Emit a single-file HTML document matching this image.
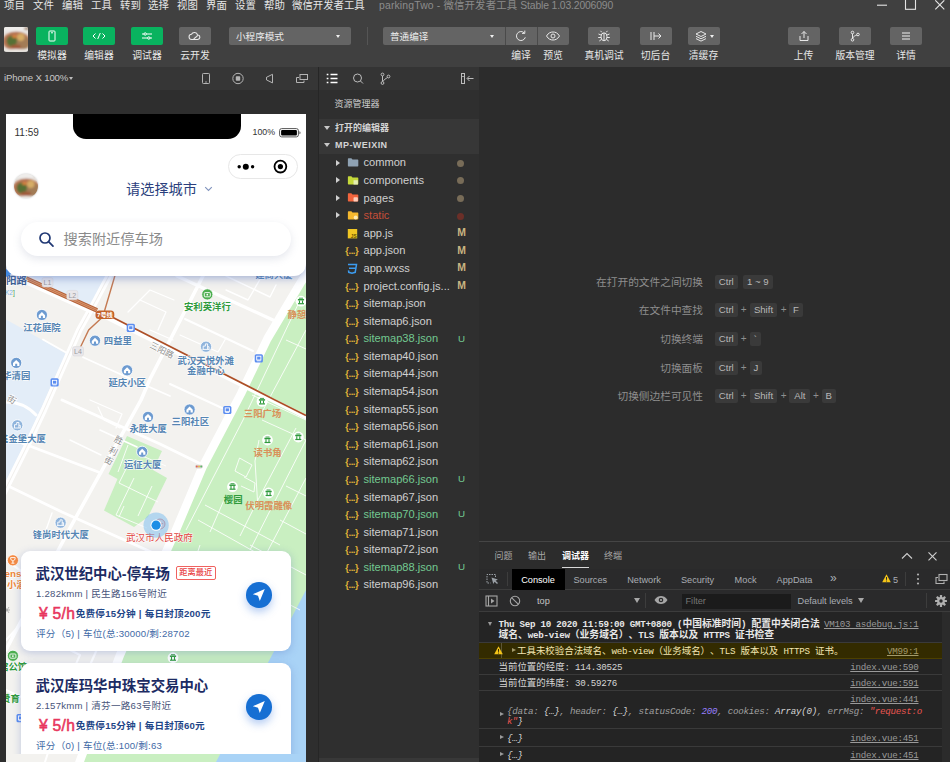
<!DOCTYPE html>
<html lang="zh-CN">
<head>
<meta charset="utf-8">
<title>parkingTwo - 微信开发者工具 Stable 1.03.2006090</title>
<style>
*{box-sizing:border-box;margin:0;padding:0}
html,body{width:950px;height:762px;overflow:hidden;background:#2c2c2c}
body{font-family:"Liberation Sans","Noto Sans CJK SC",sans-serif;color:#ccc;position:relative;font-size:10.4px;line-height:1}
.abs{position:absolute}
.t{position:absolute;white-space:nowrap;line-height:1}
/* ---------- top chrome ---------- */
#chrome{position:absolute;left:0;top:0;width:950px;height:67px;background:#404040}
#menu span{position:absolute;top:0px;font-size:10.4px;color:#e6e6e6;white-space:nowrap;line-height:12px}
.tbtn{position:absolute;top:27px;height:18px;border-radius:2px;background:#646464}
.tbtn.g{background:#09b35f}
.tlab{position:absolute;top:50px;font-size:9.8px;color:#e8e8e8;white-space:nowrap;line-height:12px;transform:translateX(-50%)}
/* ---------- simulator ---------- */
#sim{position:absolute;left:0;top:67px;width:318px;height:695px;background:#2e2e2e;overflow:hidden}
#simhead{position:absolute;left:0;top:0;width:318px;height:23px;background:#363636}
#phone{position:absolute;left:6px;top:47px;width:300px;height:648px;background:#f3f2ef;overflow:hidden}
/* ---------- explorer ---------- */
#exp{position:absolute;left:318px;top:67px;width:161px;height:695px;background:#2f2f2f;border-left:1px solid #262626;overflow:hidden}
#exphead{position:absolute;left:0;top:0;width:160px;height:23px;background:#343434}
/* ---------- editor ---------- */
#editor{position:absolute;left:479px;top:67px;width:471px;height:474px;background:#2c2c2c}
/* ---------- debugger ---------- */
#dbg{position:absolute;left:479px;top:541px;width:471px;height:221px;background:#2c2c2c;border-top:1px solid #454545;overflow:hidden}

/* explorer rows */
.sec{position:absolute;left:0;width:160px;height:17.6px;background:#373737}
.sec b{position:absolute;left:16px;top:3px;font-size:9px;line-height:12px;color:#d4d4d4;font-weight:700;white-space:nowrap}
.sec i{position:absolute;left:4.500px;top:7px;border:3.200px solid transparent;border-top:4.200px solid #c8c8c8}
.row{position:absolute;left:0;width:160px;height:17.6px}
.row .n{position:absolute;left:44.500px;top:2.300px;font-size:11.100px;line-height:13px;color:#d0d0d0;white-space:nowrap}
.row.u .n{color:#73c991}
.row.r .n{color:#c74e39}
.row .s{position:absolute;left:135.500px;width:14px;text-align:center;top:2.600px;font-size:10.400px;line-height:12px;font-weight:700;color:#c9b581}
.row.u .s{color:#73c991;font-weight:400;font-size:9.800px}
.row .d{position:absolute;left:138px;top:5.600px;width:7px;height:7px;border-radius:50%;background:#786c58}
.row.r .d{background:#6b2f28}
.row .a{position:absolute;left:17px;top:5.400px;border:3.200px solid transparent;border-left:4.400px solid #d0d0d0}
.row svg{position:absolute;left:26px;top:2px}
.row .j{position:absolute;left:26.300px;top:2.300px;font-size:9.400px;line-height:13px;font-weight:700;color:#e2b438;letter-spacing:-0.450px;white-space:nowrap}

/* editor shortcuts */
.sk{position:absolute;left:0;width:471px;height:14px}
.sk .l{position:absolute;right:247px;top:0;font-size:10.700px;line-height:14px;color:#8e8e8e;white-space:nowrap}
.sk .k{position:absolute;top:0;height:14px;border-radius:2px;background:#3a3a3a;font-size:9.600px;line-height:14px;color:#b8b8b8;text-align:center;white-space:nowrap}
.sk .p{position:absolute;top:0;font-size:10px;line-height:14px;color:#8e8e8e;width:8px;text-align:center}

/* debugger */
#dbg .tab{position:absolute;top:8px;font-size:9px;line-height:12px;color:#a8a8a8;white-space:nowrap}
#dbg .dt{position:absolute;top:31.500px;font-size:9.200px;line-height:12px;color:#a9adb3;white-space:nowrap}
#log{position:absolute;left:0;top:69.500px;width:463px;height:151px;background:#242424;font-family:"Liberation Mono","Noto Sans CJK SC",monospace;font-size:9.200px;letter-spacing:-0.260px;color:#d6d6d6}
#log .r{position:absolute;left:0;width:463px;border-bottom:1px solid #3a3a3a}
#log .x{position:absolute;white-space:nowrap;line-height:11px}
#log .lk{position:absolute;right:23.500px;white-space:nowrap;line-height:11px;color:#9a9a9a;text-decoration:underline}
#log .cj{font-size:9.450px;letter-spacing:0}
#log .bd .cj{font-size:9.770px}
#log{text-spacing-trim:space-all;font-kerning:none}

/* phone */
#phone{font-family:"Liberation Sans","Noto Sans CJK SC",sans-serif}
#phead{position:absolute;left:0;top:0;width:300px;height:162px;background:#fff;border-radius:0 0 12px 12px;box-shadow:0 2px 10px rgba(90,115,185,.55)}
#notch{position:absolute;left:66.500px;top:0;width:168px;height:24.800px;background:#000;border-radius:0 0 13px 13px}
#capsule{position:absolute;left:222.300px;top:40.300px;width:69.600px;height:24.800px;border:1px solid #e7e7e7;border-radius:13px;background:#fff}
#search{position:absolute;left:15px;top:107.700px;width:270px;height:34.300px;border-radius:17.200px;background:#fff;box-shadow:0 3px 9px rgba(120,130,160,.2)}
.card{position:absolute;left:15px;width:270px;height:100px;background:#fff;border-radius:9px;box-shadow:0 2px 8px rgba(80,110,190,.32)}
.card .ti{position:absolute;left:14.500px;top:12.500px;font-size:14.400px;line-height:20px;font-weight:700;color:#1c2b63;white-space:nowrap}
.card .l2{position:absolute;left:15px;top:36px;font-size:9.600px;letter-spacing:.24px;line-height:13px;color:#48547a;white-space:nowrap}
.card .pr{position:absolute;left:18px;top:52.600px;font-size:15.600px;letter-spacing:.3px;line-height:19px;color:#e8365d;white-space:nowrap;font-weight:400;-webkit-text-stroke:.55px #e8365d}
.card .fr{position:absolute;left:54.700px;top:56.400px;font-size:9.600px;letter-spacing:.23px;line-height:13px;font-weight:700;color:#1f4687;white-space:nowrap}
.card .l4{position:absolute;left:15px;top:75.600px;font-size:9.600px;letter-spacing:.22px;line-height:13px;color:#426aa6;white-space:nowrap}
.card .nav{position:absolute;left:225px;top:31px;width:25.600px;height:25.600px;border-radius:50%;background:#166fd3;box-shadow:0 4px 8px rgba(40,110,220,.35)}
.card .bdg{position:absolute;left:154.500px;top:14.700px;height:14px;width:40.500px;border:1px solid #f0625f;border-radius:2px;color:#e8413f;font-size:8.200px;font-weight:500;line-height:12px;text-align:center;white-space:nowrap}
</style>
</head>
<body>
<div id="chrome">
  <div id="menu">
    <span style="left:4px">项目</span><span style="left:33px">文件</span><span style="left:62px">编辑</span><span style="left:91px">工具</span><span style="left:120px">转到</span><span style="left:148px">选择</span><span style="left:177px">视图</span><span style="left:206px">界面</span><span style="left:235px">设置</span><span style="left:264px">帮助</span><span style="left:292px">微信开发者工具</span>
    <span style="left:379px;color:#8c8c8c;letter-spacing:.16px">parkingTwo - 微信开发者工具 <i style="font-style:normal;letter-spacing:-.17px">Stable 1.03.2006090</i></span>
  </div>
  <!-- window controls -->
  <svg class="abs" style="left:870px;top:0" width="80" height="14" viewBox="0 0 80 14" fill="none" stroke="#e4e4e4" stroke-width="1.1">
    <path d="M7 5.2h10"/><rect x="35.5" y="-1" width="10" height="10.3"/><path d="M65.3 0.3l9 9M74.3 0.3l-9 9"/>
  </svg>
  <!-- avatar -->
  <div class="abs" id="tavatar" style="left:3.600px;top:27px;width:24.500px;height:24.500px;border-radius:2px;overflow:hidden"><svg width="24.500" height="24.500" viewBox="0 0 24.500 24.500"><defs><filter id="fb1" x="-20%" y="-20%" width="140%" height="140%"><feGaussianBlur stdDeviation="1.150"/></filter></defs><rect width="24.500" height="24.500" fill="#e6e2dd"/><g filter="url(#fb1)"><rect x="-2" y="-2" width="29" height="6" fill="#efedeb"/><ellipse cx="12.300" cy="14.200" rx="13.500" ry="9.600" fill="#b67452"/><ellipse cx="19" cy="16" rx="7" ry="6.500" fill="#a27c56"/><ellipse cx="7.800" cy="14" rx="5.200" ry="5.600" fill="#566f36"/><ellipse cx="10.500" cy="9.500" rx="2.600" ry="1.600" fill="#d9823c"/><circle cx="16.800" cy="10.200" r="3.700" fill="#d6ad66"/><ellipse cx="12" cy="19.600" rx="5" ry="2" fill="#a05a3a"/><ellipse cx="12" cy="24.200" rx="13" ry="2.300" fill="#ece9e4"/><ellipse cx="23" cy="1.500" rx="3" ry="1.500" fill="#a58a72"/></g></svg></div>
  <!-- left buttons -->
  <div class="tbtn g" style="left:36px;width:32px"><svg width="32" height="18" viewBox="0 0 32 18" fill="none" stroke="#fff" stroke-width="1"><rect x="13" y="4" width="6" height="10" rx="0.8"/><path d="M15 5.8h2"/></svg></div>
  <div class="tbtn g" style="left:83px;width:32px"><svg width="32" height="18" viewBox="0 0 32 18" fill="none" stroke="#fff" stroke-width="1"><path d="M12.5 6.5L10 9l2.5 2.5M19.5 6.5L22 9l-2.5 2.5M17.3 6l-2.6 6"/></svg></div>
  <div class="tbtn g" style="left:131px;width:32px"><svg width="32" height="18" viewBox="0 0 32 18" fill="none" stroke="#fff" stroke-width="1"><path d="M11 7h2M15.5 7H21M11 11h5.5M19 11h2"/><circle cx="14.2" cy="7" r="1.2"/><circle cx="17.8" cy="11" r="1.2"/></svg></div>
  <div class="tbtn" style="left:179px;width:32px"><svg width="32" height="18" viewBox="0 0 32 18" fill="none" stroke="#e8e8e8" stroke-width="1.1"><path d="M14.5 12.5h-1.7a2.6 2.6 0 0 1-.3-5.2 3.2 3.2 0 0 1 6 .6c0 2-2.6 2.3-4 4.600h4.300a2.300 2.300 0 0 0 .4-4.500"/></svg></div>
  <div class="tlab" style="left:52px">模拟器</div><div class="tlab" style="left:99px">编辑器</div><div class="tlab" style="left:147px">调试器</div><div class="tlab" style="left:195px">云开发</div>
  <!-- dropdown 1 -->
  <div class="tbtn" style="left:229px;width:122px"><span class="t" style="left:7px;top:4px;font-size:9.6px;line-height:12px;color:#ececec">小程序模式</span><i class="abs" style="left:107px;top:8px;border:2.5px solid transparent;border-top:3px solid #f0f0f0"></i></div>
  <div class="abs" style="left:367px;top:27px;width:1px;height:18px;background:#555"></div>
  <!-- dropdown 2 + compile + preview -->
  <div class="tbtn" style="left:383px;width:186px"><span class="t" style="left:7px;top:4px;font-size:9.6px;line-height:12px;color:#ececec">普通编译</span><i class="abs" style="left:107px;top:8px;border:2.5px solid transparent;border-top:3px solid #f0f0f0"></i>
    <div class="abs" style="left:122px;top:0;width:1px;height:18px;background:#4a4a4a"></div><div class="abs" style="left:154px;top:0;width:1px;height:18px;background:#4a4a4a"></div>
    <svg class="abs" style="left:122px;top:0" width="32" height="18" viewBox="0 0 32 18" fill="none" stroke="#e8e8e8" stroke-width="1"><path d="M20.300 10.300a4.500 4.500 0 1 1-1-4.300"/><path d="M19.800 3.600v2.800h-2.800" /></svg>
    <svg class="abs" style="left:154px;top:0" width="32" height="18" viewBox="0 0 32 18" fill="none" stroke="#e8e8e8" stroke-width="1"><path d="M9.500 9c2-3.300 4.300-4 6.500-4s4.500.7 6.500 4c-2 3.300-4.300 4-6.500 4s-4.500-.7-6.500-4z"/><circle cx="16" cy="9" r="2"/></svg>
  </div>
  <div class="tlab" style="left:521px">编译</div><div class="tlab" style="left:553px">预览</div>
  <!-- real-device / background / cache -->
  <div class="tbtn" style="left:588px;width:32px"><svg width="32" height="18" viewBox="0 0 32 18" fill="none" stroke="#e8e8e8" stroke-width="1"><ellipse cx="16" cy="9.800" rx="3" ry="4"/><path d="M16 6v7.500M13.800 5.300L12.500 3.800M18.200 5.300l1.300-1.500M13 8l-2.500-1M19 8l2.500-1M13 10.500h-2.800M19 10.500h2.800M13.300 12.500l-2 1.500M18.700 12.500l2 1.500"/></svg></div>
  <div class="tbtn" style="left:639.500px;width:32px"><svg width="32" height="18" viewBox="0 0 32 18" fill="none" stroke="#e8e8e8" stroke-width="1"><path d="M11 5v8M14 5v8M14 9h7M18.500 6.500L21 9l-2.500 2.500"/></svg></div>
  <div class="tbtn" style="left:687.500px;width:32px"><svg width="32" height="18" viewBox="0 0 32 18" fill="none" stroke="#e8e8e8" stroke-width="1"><path d="M13 4.500L8 7l5 2.500L18 7z"/><path d="M8 9.300l5 2.500 5-2.500M8 11.600l5 2.500 5-2.500"/></svg><i class="abs" style="left:22px;top:8px;border:2.500px solid transparent;border-top:3px solid #f0f0f0"></i></div>
  <div class="tlab" style="left:604px">真机调试</div><div class="tlab" style="left:655.500px">切后台</div><div class="tlab" style="left:703.500px">清缓存</div>
  <!-- right buttons -->
  <div class="tbtn" style="left:787.500px;width:32px"><svg width="32" height="18" viewBox="0 0 32 18" fill="none" stroke="#e8e8e8" stroke-width="1"><path d="M12 9v4.500h8V9M16 11V4.500M13.500 7L16 4.500 18.500 7"/></svg></div>
  <div class="tbtn" style="left:839px;width:32px"><svg width="32" height="18" viewBox="0 0 32 18" fill="none" stroke="#e8e8e8" stroke-width="1"><circle cx="13.500" cy="5.500" r="1.300"/><circle cx="13.500" cy="12.800" r="1.300"/><circle cx="19" cy="7.500" r="1.300"/><path d="M13.500 6.800v4.700M13.600 11.500c.5-2 2.500-2.800 4.300-3.500"/></svg></div>
  <div class="tbtn" style="left:890px;width:32px"><svg width="32" height="18" viewBox="0 0 32 18" fill="none" stroke="#f0f0f0" stroke-width="1.200"><path d="M12 6h8M12 9h8M12 12h8"/></svg></div>
  <div class="tlab" style="left:803.500px">上传</div><div class="tlab" style="left:855px">版本管理</div><div class="tlab" style="left:906px">详情</div>
</div>
<div id="sim">
  <div id="simhead">
    <span class="t" style="left:4px;top:5px;font-size:9.6px;line-height:12px;color:#c8c8c8;letter-spacing:-0.15px">iPhone X 100%</span>
    <i class="abs" style="left:69px;top:10px;border:2.500px solid transparent;border-top:3px solid #bdbdbd"></i>
    <svg class="abs" style="left:196px;top:3px" width="120" height="18" viewBox="0 0 120 18" fill="none" stroke="#b4b4b4" stroke-width="1">
      <rect x="6.500" y="3.500" width="7" height="10" rx="0.800"/><path d="M9 12h2" stroke-width="0.800"/>
      <circle cx="42" cy="8.500" r="5.200"/><rect x="39.800" y="6.300" width="4.400" height="4.400" rx="0.800" fill="#b4b4b4" stroke="none"/>
      <path d="M70.500 7.300l6-3v8.600l-6-3z M70.500 7.300v2.600"/>
      <rect x="104" y="4.500" width="7.500" height="5"/><path d="M103 7.500h-2.500v5h7.500v-2"/>
    </svg>
  </div>
  <div id="phone">
    <!--MAPSTART--><svg id="map" style="position:absolute;left:0;top:0" width="300" height="648" viewBox="6 114 300 648" font-family="Liberation Sans,Noto Sans CJK SC,sans-serif">
<rect x="6" y="114" width="300" height="648" fill="#f3f2ef"/>
<path d="M20 270L112 270L96 302L92 309z" fill="#e3edf8"/>
<path d="M6 319.500L24.900 330L66.600 354L58 370L40.400 410L22.500 448L6 481z" fill="#e3edf8"/>
<path d="M314 262L300.500 283L267.500 338.500L241 393.600L202.500 467L176.500 528.600L120 655L81 758L79 770L310 770z" fill="#c9efc1"/>
<path d="M310 583L306 590L216 762L212 770L310 770z" fill="#a9d3f6"/>
<path d="M127 436L162 451L153 470L167 478L148 517L134 527L104 510.500L117.500 479L108.500 474z" fill="#c9efc1"/>
<g fill="none" stroke="#fff" stroke-width=".9" opacity=".95"><path d="M302 296L243 420L186 530"/><path d="M306 330L262 412"/><path d="M286 340L306 349"/><path d="M252 395L306 420"/><path d="M239.500 458L252 465L246 477L235 471z"/><path d="M244 477L255 483L254 492L241 486"/><path d="M259 440L255 461L257.500 501"/><path d="M262 420L306 440"/><path d="M296 428L257.400 501L240 536"/><path d="M306 440L265.300 520L250 550"/><path d="M306 478L262 562"/><path d="M205 505L280 545"/><path d="M198 520L262 556"/><path d="M224 500L210 532"/><path d="M286 486L306 496"/><path d="M280 520L306 534"/><path d="M250 545L306 575"/><path d="M200 545L190 575L240 600"/><path d="M240 560L225 600"/><path d="M270 570L255 610"/><path d="M175 560L225 585"/><path d="M214 566L300 610"/><path d="M290 560L276 590"/><path d="M128 445L118 472"/><path d="M140 455L166 466"/><path d="M131 459L119 483L158 502"/><path d="M134 478L116 515L147 528"/><path d="M152 486L138 516"/><path d="M124 506L119 517"/></g>
<g fill="none" stroke="#fff" stroke-linecap="round" stroke-linejoin="round"><path d="M177 276L273 320" stroke-width="3.2"/><path d="M185 319L253 351" stroke-width="2"/><path d="M205 272L150 379L141 400L70 528L40 585L6 650" stroke-width="3.6"/><path d="M62 400L160 444L205 466" stroke-width="3"/><path d="M6 437L101 473" stroke-width="2.6"/><path d="M6 485L62 512L160 556L215 585" stroke-width="2.8"/><path d="M96 312L306 417" stroke-width="4.6"/><path d="M6 402Q24 402 36 415" stroke-width="3"/><path d="M170 384L222 408" stroke-width="2"/><path d="M43 339.500L66 352.500M83 357.200L126 376.700L170 396" stroke-width="1.8"/><path d="M100 430L137 447" stroke-width="1.6"/><path d="M70 440L101 455" stroke-width="1.4"/><path d="M98 407L104 420L120 428" stroke-width="1.2"/><path d="M262 276L248 300L226 290" stroke-width="1.4"/><path d="M226 276L270 297L276 285" stroke-width="1.4"/><path d="M150 330L173 340" stroke-width="1.2"/><path d="M180 335L218 352L226 338" stroke-width="1.2"/><path d="M128 312L140 300L166 312L158 330" stroke-width="1.3"/><path d="M140 300L150 290L174 300" stroke-width="1.2"/><path d="M90 400L122 414L116 428" stroke-width="1.3"/><path d="M52 513L46 530" stroke-width="1.4"/><path d="M6 560L40 585L20 625L6 640" stroke-width="2.2"/><path d="M40 585L110 620L90 665" stroke-width="2.2"/><path d="M20 625L80 655L60 700" stroke-width="2"/><path d="M6 690L60 715L45 762" stroke-width="2"/><path d="M60 600L100 560" stroke-width="1.6"/><path d="M150 560L120 640" stroke-width="2.4"/></g>
<path d="M113 268L96 300L79.300 330L61.600 370L43.900 410L26 448L2 496" stroke="#fff" stroke-width="6.500" fill="none" stroke-linejoin="round"/><path d="M113 268L96 300L79.300 330L61.600 370L43.900 410L26 448L2 496" stroke="#eceae6" stroke-width=".8" fill="none"/>
<path d="M314 262L300.500 283L267.500 338.500L241 393.600L202.500 467L176.500 528.600L120 655L81 758L76 772" stroke="#fff" stroke-width="8.400" fill="none" stroke-linejoin="round"/>
<path d="M8 274.500L92 312.200" stroke="#fff" stroke-width="3.600" fill="none"/>
<path d="M14 273.200L97 310.400" stroke="#b4623a" stroke-width="4.600" fill="none"/>
<path d="M14 273.200L97 310.400" stroke="#dc9a72" stroke-width="2.400" fill="none"/><path d="M14 273.200L97 310.400" stroke="#b4623a" stroke-width=".7" fill="none"/>
<path d="M112 317L275 400L300 412.500L306 415.500" stroke="#ad4f27" stroke-width="1.700" fill="none"/>
<path d="M116 272L104.500 311M101 318.500L88.700 330L80.500 347" stroke="#c47a52" stroke-width="1.400" fill="none"/>
<rect x="95.500" y="310.600" width="18.800" height="8.400" rx="3.500" fill="#c4622a"/><text x="104.900" y="317.200" font-size="6.200" font-weight="700" fill="#fff" text-anchor="middle">7号线</text>
<rect x="42" y="277.6" width="11" height="9.400" rx="2" fill="#e9e7ea" stroke="#d6d4d8" stroke-width=".5"/><text x="47.5" y="285.0" font-size="7" fill="#9a9a9f" text-anchor="middle">L1</text>
<rect x="66.8" y="290.4" width="11" height="9.400" rx="2" fill="#e9e7ea" stroke="#d6d4d8" stroke-width=".5"/><text x="72.3" y="297.79999999999995" font-size="7" fill="#9a9a9f" text-anchor="middle">L2</text>
<rect x="72.5" y="346.6" width="11" height="9.400" rx="2" fill="#e9e7ea" stroke="#d6d4d8" stroke-width=".5"/><text x="78.0" y="354.0" font-size="7" fill="#9a9a9f" text-anchor="middle">L4</text>
<rect x="126.7" y="323.8" width="8.200" height="8.200" rx="1.500" fill="#5b8df0"/><rect x="128.7" y="325.8" width="4.200" height="3.800" fill="none" stroke="#fff" stroke-width=".9"/><path d="M128.9 330.40000000000003h3.800" stroke="#fff" stroke-width=".8"/>
<rect x="50.5" y="378.3" width="8.200" height="8.200" rx="1.500" fill="#5b8df0"/><rect x="52.5" y="380.3" width="4.200" height="3.800" fill="none" stroke="#fff" stroke-width=".9"/><path d="M52.7 384.90000000000003h3.800" stroke="#fff" stroke-width=".8"/>
<rect x="254.7" y="354.2" width="8.200" height="8.200" rx="1.500" fill="#5b8df0"/><rect x="256.7" y="356.2" width="4.200" height="3.800" fill="none" stroke="#fff" stroke-width=".9"/><path d="M256.9 360.8h3.800" stroke="#fff" stroke-width=".8"/>
<rect x="223.2" y="405.9" width="8.200" height="8.200" rx="1.500" fill="#5b8df0"/><rect x="225.2" y="407.9" width="4.200" height="3.800" fill="none" stroke="#fff" stroke-width=".9"/><path d="M225.39999999999998 412.5h3.800" stroke="#fff" stroke-width=".8"/>
<rect x="16.5" y="714" width="8.200" height="8.200" rx="1.500" fill="#5b8df0"/><rect x="18.5" y="716" width="4.200" height="3.800" fill="none" stroke="#fff" stroke-width=".9"/><path d="M18.7 720.6h3.800" stroke="#fff" stroke-width=".8"/>
<rect x="195" y="464.800" width="8" height="3.600" rx="1.800" fill="#d9d6d2"/><circle cx="196.800" cy="466.600" r="1" fill="#e0605a"/><circle cx="199" cy="466.600" r="1" fill="#e6b84a"/><circle cx="201.200" cy="466.600" r="1" fill="#5fb86a"/>
<circle cx="41.9" cy="315" r="5.600" fill="#6d9bd0" stroke="#fff" stroke-width=".8"/><path d="M38.699999999999996 315.2L41.9 312L45.1 315.2V318H42.9V315.8H40.9V318H38.699999999999996z" fill="#fff"/>
<text x="41.9" y="331" font-size="9.4" font-weight="700" fill="#5585b3" text-anchor="middle" stroke="#fff" stroke-opacity=".85" stroke-width="1.3" paint-order="stroke" stroke-linejoin="round" >江花庭院</text>
<circle cx="95" cy="340.7" r="5.600" fill="#6d9bd0" stroke="#fff" stroke-width=".8"/><path d="M91.8 340.9L95 337.7L98.2 340.9V343.7H96V341.5H94V343.7H91.8z" fill="#fff"/>
<text x="103.8" y="344.2" font-size="9.4" font-weight="700" fill="#5585b3" text-anchor="start" stroke="#fff" stroke-opacity=".85" stroke-width="1.3" paint-order="stroke" stroke-linejoin="round" >四益里</text>
<circle cx="16.2" cy="362.9" r="5.600" fill="#6d9bd0" stroke="#fff" stroke-width=".8"/><path d="M13.0 363.09999999999997L16.2 359.9L19.4 363.09999999999997V365.9H17.2V363.7H15.2V365.9H13.0z" fill="#fff"/>
<text x="16.2" y="379" font-size="9.4" font-weight="700" fill="#5585b3" text-anchor="middle" stroke="#fff" stroke-opacity=".85" stroke-width="1.3" paint-order="stroke" stroke-linejoin="round" >华清园</text>
<circle cx="127.1" cy="370.3" r="5.600" fill="#6d9bd0" stroke="#fff" stroke-width=".8"/><path d="M123.89999999999999 370.5L127.1 367.3L130.29999999999998 370.5V373.3H128.1V371.1H126.1V373.3H123.89999999999999z" fill="#fff"/>
<text x="127.2" y="386" font-size="9.4" font-weight="700" fill="#5585b3" text-anchor="middle" stroke="#fff" stroke-opacity=".85" stroke-width="1.3" paint-order="stroke" stroke-linejoin="round" >延庆小区</text>
<circle cx="207.3" cy="294.4" r="5.600" fill="#4cae4f" stroke="#fff" stroke-width=".8"/><rect x="204.3" y="292.59999999999997" width="6" height="4.200" rx=".8" fill="none" stroke="#fff" stroke-width=".9"/><circle cx="207.3" cy="294.7" r=".9" fill="#fff"/>
<text x="207.4" y="310.3" font-size="9.4" font-weight="700" fill="#2f9a3c" text-anchor="middle" stroke="#fff" stroke-opacity=".85" stroke-width="1.3" paint-order="stroke" stroke-linejoin="round" >安利英洋行</text>
<circle cx="206" cy="346.7" r="5.600" fill="#8fb4dc" stroke="#fff" stroke-width=".8"/><path d="M203.2 349.3V346.09999999999997H205.4V343.9H207.6V349.3M207.6 346.7H209V349.3M202.4 349.4H209.6" fill="none" stroke="#fff" stroke-width=".9"/>
<text x="205.7" y="363.6" font-size="9.4" font-weight="700" fill="#5585b3" text-anchor="middle" stroke="#fff" stroke-opacity=".85" stroke-width="1.3" paint-order="stroke" stroke-linejoin="round" >武汉天悦外滩</text>
<text x="205.8" y="374" font-size="9.4" font-weight="700" fill="#5585b3" text-anchor="middle" stroke="#fff" stroke-opacity=".85" stroke-width="1.3" paint-order="stroke" stroke-linejoin="round" >金融中心</text>
<circle cx="301" cy="301.2" r="5.400" fill="#fff"/><path d="M299 298.2h4" stroke="#2f9a3c" stroke-width=".9" fill="none"/><path d="M297.9 299.7h6.200" stroke="#2f9a3c" stroke-width="1.500" fill="none"/><path d="M299.5 300.4v3M302.5 300.4v3" stroke="#2f9a3c" stroke-width="1.100" fill="none"/><path d="M298 303.7h6" stroke="#2f9a3c" stroke-width="1.200" fill="none"/>
<text x="287.4" y="317.6" font-size="9.4" font-weight="700" fill="#d9915a" text-anchor="start"  >静憩</text>
<text x="274" y="277.5" font-size="9.4" font-weight="700" fill="#5585b3" text-anchor="middle" stroke="#fff" stroke-opacity=".85" stroke-width="1.3" paint-order="stroke" stroke-linejoin="round" >建商大厦</text>
<circle cx="148" cy="416.9" r="5.600" fill="#6d9bd0" stroke="#fff" stroke-width=".8"/><path d="M144.8 417.09999999999997L148 413.9L151.2 417.09999999999997V419.9H149V417.7H147V419.9H144.8z" fill="#fff"/>
<text x="148.2" y="432.4" font-size="9.4" font-weight="700" fill="#5585b3" text-anchor="middle" stroke="#fff" stroke-opacity=".85" stroke-width="1.3" paint-order="stroke" stroke-linejoin="round" >永胜大厦</text>
<circle cx="189.6" cy="409.5" r="5.600" fill="#6d9bd0" stroke="#fff" stroke-width=".8"/><path d="M186.4 409.7L189.6 406.5L192.79999999999998 409.7V412.5H190.6V410.3H188.6V412.5H186.4z" fill="#fff"/>
<text x="190.3" y="425.4" font-size="9.4" font-weight="700" fill="#5585b3" text-anchor="middle" stroke="#fff" stroke-opacity=".85" stroke-width="1.3" paint-order="stroke" stroke-linejoin="round" >三阳社区</text>
<circle cx="262" cy="401.4" r="5.400" fill="#fff"/><path d="M260 398.4h4" stroke="#2f9a3c" stroke-width=".9" fill="none"/><path d="M258.9 399.9h6.200" stroke="#2f9a3c" stroke-width="1.500" fill="none"/><path d="M260.5 400.59999999999997v3M263.5 400.59999999999997v3" stroke="#2f9a3c" stroke-width="1.100" fill="none"/><path d="M259 403.9h6" stroke="#2f9a3c" stroke-width="1.200" fill="none"/>
<text x="262.6" y="417" font-size="9.4" font-weight="700" fill="#d9915a" text-anchor="middle"  >三阳广场</text>
<circle cx="267.5" cy="440" r="5.400" fill="#fff"/><path d="M265.5 437h4" stroke="#2f9a3c" stroke-width=".9" fill="none"/><path d="M264.4 438.5h6.200" stroke="#2f9a3c" stroke-width="1.500" fill="none"/><path d="M266.0 439.2v3M269.0 439.2v3" stroke="#2f9a3c" stroke-width="1.100" fill="none"/><path d="M264.5 442.5h6" stroke="#2f9a3c" stroke-width="1.200" fill="none"/>
<text x="267.6" y="455.5" font-size="9.4" font-weight="700" fill="#d9915a" text-anchor="middle"  >读书角</text>
<circle cx="298.3" cy="437" r="5.400" fill="#fff"/><path d="M296.3 434h4" stroke="#2f9a3c" stroke-width=".9" fill="none"/><path d="M295.2 435.5h6.200" stroke="#2f9a3c" stroke-width="1.500" fill="none"/><path d="M296.8 436.2v3M299.8 436.2v3" stroke="#2f9a3c" stroke-width="1.100" fill="none"/><path d="M295.3 439.5h6" stroke="#2f9a3c" stroke-width="1.200" fill="none"/>
<circle cx="232.5" cy="486.7" r="5.400" fill="#fff"/><path d="M230.5 483.7h4" stroke="#2f9a3c" stroke-width=".9" fill="none"/><path d="M229.4 485.2h6.200" stroke="#2f9a3c" stroke-width="1.500" fill="none"/><path d="M231.0 485.9v3M234.0 485.9v3" stroke="#2f9a3c" stroke-width="1.100" fill="none"/><path d="M229.5 489.2h6" stroke="#2f9a3c" stroke-width="1.200" fill="none"/>
<text x="233.2" y="502.9" font-size="9.4" font-weight="700" fill="#2f9a3c" text-anchor="middle"  >樱园</text>
<circle cx="268.6" cy="493" r="5.400" fill="#fff"/><path d="M266.6 490h4" stroke="#2f9a3c" stroke-width=".9" fill="none"/><path d="M265.5 491.5h6.200" stroke="#2f9a3c" stroke-width="1.500" fill="none"/><path d="M267.1 492.2v3M270.1 492.2v3" stroke="#2f9a3c" stroke-width="1.100" fill="none"/><path d="M265.6 495.5h6" stroke="#2f9a3c" stroke-width="1.200" fill="none"/>
<text x="268.7" y="508.8" font-size="9.4" font-weight="700" fill="#d9915a" text-anchor="middle"  >伏明霞雕像</text>
<circle cx="142.2" cy="451.8" r="5.600" fill="#6d9bd0" stroke="#fff" stroke-width=".8"/><path d="M139.0 452.0L142.2 448.8L145.39999999999998 452.0V454.8H143.2V452.6H141.2V454.8H139.0z" fill="#fff"/>
<text x="142.7" y="467.7" font-size="9.4" font-weight="700" fill="#5585b3" text-anchor="middle" stroke="#fff" stroke-opacity=".85" stroke-width="1.3" paint-order="stroke" stroke-linejoin="round" >运征大厦</text>
<circle cx="17.3" cy="425.3" r="5.600" fill="#8fb4dc" stroke="#fff" stroke-width=".8"/><path d="M14.5 427.90000000000003V424.7H16.7V422.5H18.900000000000002V427.90000000000003M18.900000000000002 425.3H20.3V427.90000000000003M13.700000000000001 428.0H20.900000000000002" fill="none" stroke="#fff" stroke-width=".9"/>
<text x="45.9" y="441.6" font-size="9.4" font-weight="700" fill="#5585b3" text-anchor="end" stroke="#fff" stroke-opacity=".85" stroke-width="1.3" paint-order="stroke" stroke-linejoin="round" >鑫金堡大厦</text>
<circle cx="60.6" cy="522.7" r="5.600" fill="#8fb4dc" stroke="#fff" stroke-width=".8"/><path d="M57.800000000000004 525.3000000000001V522.1H60.0V519.9000000000001H62.2V525.3000000000001M62.2 522.7H63.6V525.3000000000001M57.0 525.4000000000001H64.2" fill="none" stroke="#fff" stroke-width=".9"/>
<text x="60.8" y="538.2" font-size="9.4" font-weight="700" fill="#5585b3" text-anchor="middle" stroke="#fff" stroke-opacity=".85" stroke-width="1.3" paint-order="stroke" stroke-linejoin="round" >锋尚时代大厦</text>
<circle cx="173" cy="657.7" r="5.400" fill="#fff"/><path d="M171 654.7h4" stroke="#2f9a3c" stroke-width=".9" fill="none"/><path d="M169.9 656.2h6.200" stroke="#2f9a3c" stroke-width="1.500" fill="none"/><path d="M171.5 656.9000000000001v3M174.5 656.9000000000001v3" stroke="#2f9a3c" stroke-width="1.100" fill="none"/><path d="M170 660.2h6" stroke="#2f9a3c" stroke-width="1.200" fill="none"/>
<g font-size="8.600" fill="#8d8d8d" stroke="#fff" stroke-width="1.200" paint-order="stroke"><text transform="translate(149,347) rotate(27)">三阳路</text><text transform="translate(113.500,441) rotate(27)">胜</text><text transform="translate(108,452) rotate(27)">利</text><text transform="translate(103.500,461.500) rotate(27)">街</text><text transform="translate(6.500,400) rotate(32)">街</text></g>
<text x="6" y="283.500" font-size="10.500" font-weight="700" fill="#3b5d8f" stroke="#fff" stroke-width="1.400" paint-order="stroke">阳路</text>
<text x="5" y="295" font-size="6.500" fill="#7fb2e8">K2<tspan fill="#3aa047">]</tspan></text>
<path d="M6 269l6 4.500-6 3.500z" fill="#3f8fe8"/>
<circle cx="160" cy="524" r="5" fill="#f0d0d0" stroke="#d9534f" stroke-width=".8"/><path d="M160 520.800l1 2.200 2.300.2-1.800 1.600.6 2.300-2.100-1.300-2.100 1.300.6-2.300-1.800-1.600 2.300-.2z" fill="#d9534f"/>
<text x="159.5" y="540.8" font-size="9.55" font-weight="400" fill="#e2453f" text-anchor="middle" stroke="#fff" stroke-opacity=".85" stroke-width="1.2" paint-order="stroke" stroke-linejoin="round" >武汉市人民政府</text>
<circle cx="156.100" cy="525.200" r="12.600" fill="#7fc0ee" fill-opacity=".55"/><circle cx="156.100" cy="525.200" r="5.600" fill="#fff"/><circle cx="156.100" cy="525.200" r="4.600" fill="#1e8fe6"/>
<circle cx="12.900" cy="560.300" r="5.600" fill="#f58a42" stroke="#fff" stroke-width=".8"/><path d="M10.600 557.600h4.600c0 2-.9 3.200-2.300 3.200s-2.300-1.200-2.300-3.200zM12.900 560.800v2.200M11.400 563.200h3" fill="none" stroke="#fff" stroke-width=".9"/>
<text x="4.5" y="577" font-size="9.8" font-weight="700" fill="#ef8636" text-anchor="start" stroke="#fff" stroke-opacity=".85" stroke-width="1.3" paint-order="stroke" stroke-linejoin="round" >ens</text>
<text x="4" y="587.6" font-size="9.4" font-weight="700" fill="#ef8636" text-anchor="start" stroke="#fff" stroke-opacity=".85" stroke-width="1.3" paint-order="stroke" stroke-linejoin="round" >·小酒</text>
<circle cx="12.9" cy="655.8" r="5.600" fill="#4cae4f" stroke="#fff" stroke-width=".8"/><rect x="9.9" y="654.0" width="6" height="4.200" rx=".8" fill="none" stroke="#fff" stroke-width=".9"/><circle cx="12.9" cy="656.0999999999999" r=".9" fill="#fff"/>
<text x="-1" y="670.3" font-size="9.4" font-weight="700" fill="#2f9a3c" text-anchor="start" stroke="#fff" stroke-opacity=".85" stroke-width="1.3" paint-order="stroke" stroke-linejoin="round" >馆公馆</text>
<text x="1" y="702.2" font-size="9.4" font-weight="700" fill="#2f9a3c" text-anchor="start" stroke="#fff" stroke-opacity=".85" stroke-width="1.3" paint-order="stroke" stroke-linejoin="round" >赞育</text>
<path d="M5 607l4 6M9 607l-4 6M4 610h6" stroke="#999" stroke-width=".7"/>
</svg><!--MAPEND-->
    <div id="phead">
      <div id="notch"></div>
      <span class="t" style="left:8.500px;top:12.800px;font-size:10px;line-height:12px;color:#333">11:59</span>
      <span class="t" style="left:246.500px;top:12.800px;font-size:8.800px;line-height:11px;color:#333">100%</span>
      <svg class="abs" style="left:273px;top:13.500px" width="23" height="10" viewBox="0 0 23 10"><rect x=".6" y=".6" width="18.800" height="8.300" rx="2" fill="none" stroke="#555" stroke-width="1"/><rect x="2.100" y="2.100" width="15.800" height="5.300" rx="1" fill="#000"/><path d="M20.600 3.200c1 .3 1 2.800 0 3.100z" fill="#000"/></svg>
      <div id="capsule">
        <svg class="abs" style="left:0;top:0" width="68" height="23" viewBox="0 0 68 23"><circle cx="10.200" cy="11.800" r="1.700" fill="#000"/><circle cx="16.800" cy="11.800" r="3" fill="#000"/><circle cx="23.600" cy="11.800" r="1.700" fill="#000"/><circle cx="51.400" cy="11.600" r="5.900" fill="none" stroke="#000" stroke-width="1.800"/><circle cx="51.400" cy="11.600" r="2.600" fill="#000"/></svg>
      </div>
      <div class="abs" style="left:8px;top:59.500px;width:24px;height:24px;border-radius:50%;overflow:hidden;box-shadow:0 0 2px rgba(0,0,0,.3)"><svg width="24.500" height="24.500" viewBox="0 0 24.500 24.500"><defs><filter id="fb2" x="-20%" y="-20%" width="140%" height="140%"><feGaussianBlur stdDeviation="1.150"/></filter></defs><rect width="24.500" height="24.500" fill="#e6e2dd"/><g filter="url(#fb2)"><rect x="-2" y="-2" width="29" height="6" fill="#efedeb"/><ellipse cx="12.300" cy="14.200" rx="13.500" ry="9.600" fill="#b67452"/><ellipse cx="19" cy="16" rx="7" ry="6.500" fill="#a27c56"/><ellipse cx="7.800" cy="14" rx="5.200" ry="5.600" fill="#566f36"/><ellipse cx="10.500" cy="9.500" rx="2.600" ry="1.600" fill="#d9823c"/><circle cx="16.800" cy="10.200" r="3.700" fill="#d6ad66"/><ellipse cx="12" cy="19.600" rx="5" ry="2" fill="#a05a3a"/><ellipse cx="12" cy="24.200" rx="13" ry="2.300" fill="#ece9e4"/><ellipse cx="23" cy="1.500" rx="3" ry="1.500" fill="#a58a72"/></g></svg></div>
      <span class="t" style="left:120px;top:66.500px;font-size:14.200px;line-height:17px;color:#2b3f7d">请选择城市</span>
      <svg class="abs" style="left:198px;top:71.500px" width="9" height="6" viewBox="0 0 9 6" fill="none" stroke="#8093bd" stroke-width="1.100"><path d="M1.200 1.200L4.500 4.500 7.800 1.200"/></svg>
      <div id="search">
        <svg class="abs" style="left:16.500px;top:9px" width="17" height="17" viewBox="0 0 17 17" fill="none" stroke="#203874" stroke-width="1.700"><circle cx="7" cy="7" r="5"/><path d="M10.800 10.800L15 15.200" stroke-linecap="round"/></svg>
        <span class="t" style="left:42.500px;top:8.200px;font-size:14.200px;line-height:18px;color:#8a8a8a">搜索附近停车场</span>
      </div>
    </div>
    <div id="cards" style="position:absolute;left:0;top:420px;width:300px;height:220.400px;overflow:hidden">
      <div class="card" style="top:17px">
        <span class="ti">武汉世纪中心-停车场</span><span class="bdg">距离最近</span>
        <span class="l2">1.282kmm | 民生路156号附近</span>
        <span class="pr">¥ 5/h</span><span class="fr">免费停15分钟 | 每日封顶200元</span>
        <span class="l4">评分（5) | 车位(总:30000/剩:28702</span>
        <div class="nav"><svg width="25.600" height="25.600" viewBox="0 0 25.600 25.600"><path d="M18.800 7L6.800 12.200l5.200 1.500 1.800 5.300z" fill="#fff"/></svg></div>
      </div>
      <div class="card" style="top:129px;height:110px">
        <span class="ti">武汉库玛华中珠宝交易中心</span>
        <span class="l2">2.157kmm | 清芬一路63号附近</span>
        <span class="pr">¥ 5/h</span><span class="fr">免费停15分钟 | 每日封顶60元</span>
        <span class="l4">评分（0) | 车位(总:100/剩:63</span>
        <div class="nav"><svg width="25.600" height="25.600" viewBox="0 0 25.600 25.600"><path d="M18.800 7L6.800 12.200l5.200 1.500 1.800 5.300z" fill="#fff"/></svg></div>
      </div>
    </div>
  </div>
</div>
<div id="exp">
  <div class="abs" style="left:0;top:691px;width:160px;height:4px;background:#383838"></div>
  <div id="exphead">
    <svg class="abs" style="left:0;top:3px" width="160" height="18" viewBox="0 0 160 18" fill="none" stroke="#bdbdbd" stroke-width="1">
      <path d="M8.500 4.500h0.100M8.500 8.500h0.100M8.500 12.500h0.100" stroke="#fff" stroke-width="1.600" stroke-linecap="square"/><path d="M11.500 4.500h7M11.500 8.500h7M11.500 12.500h7" stroke="#fff" stroke-width="1.300"/>
      <circle cx="38.500" cy="8" r="4"/><path d="M41.500 11l2.500 2.500"/>
      <circle cx="63.500" cy="4.500" r="1.400"/><circle cx="63.500" cy="13" r="1.400"/><circle cx="69.500" cy="6.500" r="1.400"/><path d="M63.500 6v5.500M64 11.500c1-2 2.500-2.600 4.500-4"/>
      <rect x="142.500" y="3.500" width="3" height="10"/><path d="M143 6.500h2" stroke-width=".8"/><path d="M154.500 8.500h-6M150.500 6l-2.500 2.500 2.500 2.500"/>
    </svg>
  </div>
  <span class="t" style="left:15.500px;top:31px;font-size:9px;line-height:12px;color:#d0d0d0">资源管理器</span>
  <div class="sec" style="top:51.500px"><i></i><b>打开的编辑器</b></div>
  <div class="sec" style="top:69.100px"><i></i><b style="letter-spacing:.45px">MP-WEIXIN</b></div>
  <div class="row" style="top:87.20px"><i class="a"></i><svg style="left:27.500px;top:3.100px" width="12.200" height="11.300" viewBox="0 0 14 13"><path d="M1 2.200a.8.800 0 0 1 .8-.800h3.200l1.300 1.400h5.900a.8.800 0 0 1 .8.800v6.600a.8.800 0 0 1-.8.800H1.800a.8.800 0 0 1-.8-.800z" fill="#8fa2b3"/></svg><span class="n">common</span><i class="d"></i></div>
  <div class="row" style="top:104.78px"><i class="a"></i><svg style="left:27.500px;top:3.100px" width="12.200" height="11.300" viewBox="0 0 14 13"><path d="M1 2.200a.8.800 0 0 1 .8-.800h3.200l1.300 1.400h5.900a.8.800 0 0 1 .8.800v6.600a.8.800 0 0 1-.8.800H1.800a.8.800 0 0 1-.8-.800z" fill="#c5d93a"/><rect x="7.500" y="6" width="5" height="5" fill="#e8f0c0" opacity=".9"/></svg><span class="n">components</span><i class="d"></i></div>
  <div class="row" style="top:122.36px"><i class="a"></i><svg style="left:27.500px;top:3.100px" width="12.200" height="11.300" viewBox="0 0 14 13"><path d="M1 2.200a.8.800 0 0 1 .8-.800h3.200l1.300 1.400h5.900a.8.800 0 0 1 .8.800v6.600a.8.800 0 0 1-.8.800H1.800a.8.800 0 0 1-.8-.800z" fill="#f2643d"/><rect x="7.500" y="6" width="5" height="5" rx="1" fill="#ffd9c9" opacity=".9"/></svg><span class="n">pages</span><i class="d"></i></div>
  <div class="row r" style="top:139.94px"><i class="a"></i><svg style="left:27.500px;top:3.100px" width="12.200" height="11.300" viewBox="0 0 14 13"><path d="M1 2.200a.8.800 0 0 1 .8-.800h3.200l1.300 1.400h5.900a.8.800 0 0 1 .8.800v6.600a.8.800 0 0 1-.8.800H1.800a.8.800 0 0 1-.8-.800z" fill="#f5b82e"/><circle cx="10" cy="8.500" r="2.300" fill="#fff0c0" opacity=".9"/></svg><span class="n">static</span><i class="d"></i></div>
  <div class="row" style="top:157.52px"><svg width="14" height="13" viewBox="0 0 14 13"><rect x="2.800" y="2" width="9.400" height="9.400" fill="#f0c623"/><text x="11.600" y="10.700" font-size="4.800" font-weight="700" text-anchor="end" fill="#6b5600" font-family="Liberation Sans,sans-serif">JS</text></svg><span class="n">app.js</span><span class="s">M</span></div>
  <div class="row" style="top:175.10px"><span class="j">{...}</span><span class="n">app.json</span><span class="s">M</span></div>
  <div class="row" style="top:192.68px"><svg width="14" height="13" viewBox="0 0 14 13" fill="none" stroke="#3c9cf0" stroke-width="1.500"><path d="M3 2.500h8.500l-1.300 7.800-3.200 1-3.200-1-.3-2M4 6.300h6.500"/></svg><span class="n">app.wxss</span><span class="s">M</span></div>
  <div class="row" style="top:210.26px"><span class="j">{...}</span><span class="n">project.config.js...</span><span class="s">M</span></div>
  <div class="row" style="top:227.84px"><span class="j">{...}</span><span class="n">sitemap.json</span></div>
  <div class="row" style="top:245.42px"><span class="j">{...}</span><span class="n">sitemap6.json</span></div>
  <div class="row u" style="top:263.00px"><span class="j">{...}</span><span class="n">sitemap38.json</span><span class="s">U</span></div>
  <div class="row" style="top:280.58px"><span class="j">{...}</span><span class="n">sitemap40.json</span></div>
  <div class="row" style="top:298.16px"><span class="j">{...}</span><span class="n">sitemap44.json</span></div>
  <div class="row" style="top:315.74px"><span class="j">{...}</span><span class="n">sitemap54.json</span></div>
  <div class="row" style="top:333.32px"><span class="j">{...}</span><span class="n">sitemap55.json</span></div>
  <div class="row" style="top:350.90px"><span class="j">{...}</span><span class="n">sitemap56.json</span></div>
  <div class="row" style="top:368.48px"><span class="j">{...}</span><span class="n">sitemap61.json</span></div>
  <div class="row" style="top:386.06px"><span class="j">{...}</span><span class="n">sitemap62.json</span></div>
  <div class="row u" style="top:403.64px"><span class="j">{...}</span><span class="n">sitemap66.json</span><span class="s">U</span></div>
  <div class="row" style="top:421.22px"><span class="j">{...}</span><span class="n">sitemap67.json</span></div>
  <div class="row u" style="top:438.80px"><span class="j">{...}</span><span class="n">sitemap70.json</span><span class="s">U</span></div>
  <div class="row" style="top:456.38px"><span class="j">{...}</span><span class="n">sitemap71.json</span></div>
  <div class="row" style="top:473.96px"><span class="j">{...}</span><span class="n">sitemap72.json</span></div>
  <div class="row u" style="top:491.54px"><span class="j">{...}</span><span class="n">sitemap88.json</span><span class="s">U</span></div>
  <div class="row" style="top:509.12px"><span class="j">{...}</span><span class="n">sitemap96.json</span></div>
</div>
<div id="editor">
  <div class="sk" style="top:207.5px"><span class="l">在打开的文件之间切换</span><span class="k" style="left:235.6px;width:23.3px">Ctrl</span><span class="k" style="left:263.5px;width:30.5px">1 ~ 9</span></div>
  <div class="sk" style="top:236.1px"><span class="l">在文件中查找</span><span class="k" style="left:235.6px;width:23.3px">Ctrl</span><span class="p" style="left:260.6px">+</span><span class="k" style="left:270.7px;width:27.6px">Shift</span><span class="p" style="left:300.7px">+</span><span class="k" style="left:310.4px;width:13.3px">F</span></div>
  <div class="sk" style="top:264.8px"><span class="l">切换终端</span><span class="k" style="left:235.6px;width:23.3px">Ctrl</span><span class="p" style="left:260.6px">+</span><span class="k" style="left:270.7px;width:11.4px">`</span></div>
  <div class="sk" style="top:293.8px"><span class="l">切换面板</span><span class="k" style="left:235.6px;width:23.3px">Ctrl</span><span class="p" style="left:260.6px">+</span><span class="k" style="left:270.7px;width:12.5px">J</span></div>
  <div class="sk" style="top:322.4px"><span class="l">切换侧边栏可见性</span><span class="k" style="left:235.6px;width:23.3px">Ctrl</span><span class="p" style="left:260.6px">+</span><span class="k" style="left:270.7px;width:27.6px">Shift</span><span class="p" style="left:300.7px">+</span><span class="k" style="left:310.4px;width:21.1px">Alt</span><span class="p" style="left:332.9px">+</span><span class="k" style="left:343.0px;width:13.6px">B</span></div>
</div>
<div id="dbg">
  <span class="tab" style="left:15.500px">问题</span><span class="tab" style="left:49px">输出</span><span class="tab" style="left:83px;color:#fff;font-weight:700">调试器</span><span class="tab" style="left:125px">终端</span>
  <div class="abs" style="left:83px;top:24.5px;width:27px;height:1px;background:#d8d8d8"></div>
  <svg class="abs" style="left:418px;top:6px" width="44" height="16" viewBox="0 0 44 16" fill="none" stroke="#d0d0d0" stroke-width="1.100"><path d="M5 10.500L10 5.500l5 5M31.500 4.300l8 8M39.500 4.300l-8 8"/></svg>
  <!-- devtools tab bar -->
  <div class="abs" style="left:0;top:26.5px;width:471px;height:21px;background:#2a2a2b;border-bottom:1px solid #3c3c3c"></div>
  <svg class="abs" style="left:6px;top:30px" width="16" height="14" viewBox="0 0 16 14" fill="none" stroke="#9aa0a6" stroke-width="1"><path d="M10.500 5V2.500h-8.500v8.500h3.500" stroke-dasharray="1.500 1"/><path d="M6.500 5.500l1.800 6.500 1.300-2.300 2.400 2.400 1-1-2.400-2.400 2.300-1.300z" fill="#9aa0a6" stroke="none"/></svg>
  <div class="abs" style="left:27.500px;top:30px;width:1px;height:14px;background:#3d3d3d"></div>
  <div class="abs" style="left:32.500px;top:27px;width:53px;height:20.500px;background:#000"></div>
  <span class="dt" style="left:59.0px;transform:translateX(-50%);color:#fff">Console</span><span class="dt" style="left:111.3px;transform:translateX(-50%)">Sources</span><span class="dt" style="left:165.0px;transform:translateX(-50%)">Network</span><span class="dt" style="left:218.5px;transform:translateX(-50%)">Security</span><span class="dt" style="left:266.6px;transform:translateX(-50%)">Mock</span><span class="dt" style="left:315.5px;transform:translateX(-50%)">AppData</span>
  <span class="dt" style="left:351px;font-size:12px;top:29.5px">»</span>
  <svg class="abs" style="left:402.500px;top:32px" width="9" height="9" viewBox="0 0 9 9"><path d="M4.500 0.300L8.800 8.300H0.200z" fill="#f5c518"/><path d="M4.500 3v2.800M4.500 6.600v.9" stroke="#2a2a2b" stroke-width="1"/></svg>
  <span class="dt" style="left:414px">5</span>
  <div class="abs" style="left:425.500px;top:30px;width:1px;height:14px;background:#3d3d3d"></div>
  <svg class="abs" style="left:436px;top:30px" width="6" height="14" viewBox="0 0 6 14" fill="#b0b0b0"><circle cx="3" cy="2.500" r="1.100"/><circle cx="3" cy="7" r="1.100"/><circle cx="3" cy="11.500" r="1.100"/></svg>
  <svg class="abs" style="left:456px;top:31px" width="13" height="12" viewBox="0 0 13 12" fill="none" stroke="#b0b0b0" stroke-width="1.100"><rect x="4" y="1.500" width="8" height="6"/><path d="M3 4.500H1v6h8V8.500"/></svg>
  <!-- filter row -->
  <div class="abs" style="left:0;top:48px;width:471px;height:21.500px;background:#2a2a2b;border-bottom:1px solid #3c3c3c"></div>
  <svg class="abs" style="left:5.500px;top:52px" width="42" height="14" viewBox="0 0 42 14" fill="none" stroke="#a6a6a6" stroke-width="1.100"><rect x="1" y="2" width="11" height="10"/><path d="M3.500 2v10"/><path d="M6 4.500L9.500 7 6 9.500z" fill="#a6a6a6" stroke="none"/><circle cx="30" cy="7" r="4.700"/><path d="M26.800 3.800l6.400 6.400"/></svg>
  <span class="dt" style="left:58px;top:53px;color:#c4c4c4">top</span>
  <i class="abs" style="left:154.500px;top:56px;border:3px solid transparent;border-top:5px solid #a8a8a8"></i>
  <div class="abs" style="left:165.500px;top:51px;width:1px;height:15px;background:#3d3d3d"></div>
  <svg class="abs" style="left:175px;top:53px" width="14" height="10" viewBox="0 0 14 10"><path d="M0.500 5C2.500 1.800 4.800 1 7 1s4.500.8 6.500 4c-2 3.200-4.300 4-6.500 4S2.500 8.200.500 5z" fill="#a6a6a6"/><circle cx="7" cy="5" r="2.300" fill="#2a2a2b"/><circle cx="7" cy="5" r="1.100" fill="#a6a6a6"/></svg>
  <div class="abs" style="left:202.500px;top:51.5px;width:109.500px;height:15px;background:#1b1b1b"></div>
  <span class="dt" style="left:206.500px;top:53px;color:#757575">Filter</span>
  <span class="dt" style="left:318.500px;top:53px">Default levels</span>
  <i class="abs" style="left:378.500px;top:55.500px;border:3.100px solid transparent;border-top:5px solid #a8a8a8"></i>
  <div class="abs" style="left:446.500px;top:51px;width:1px;height:15px;background:#3d3d3d"></div>
  <svg class="abs" style="left:455.500px;top:53px" width="12" height="12" viewBox="0 0 12 12"><g fill="#b0b0b0"><circle cx="6" cy="6" r="3.900"/><rect x="4.900" y="0" width="2.200" height="12" rx=".5" transform="rotate(0 6 6)"/><rect x="4.900" y="0" width="2.200" height="12" rx=".5" transform="rotate(45 6 6)"/><rect x="4.900" y="0" width="2.200" height="12" rx=".5" transform="rotate(90 6 6)"/><rect x="4.900" y="0" width="2.200" height="12" rx=".5" transform="rotate(135 6 6)"/></g><circle cx="6" cy="6" r="1.700" fill="#2a2a2b"/></svg>
  <!-- scrollbar gutter -->
  <div class="abs" style="left:463px;top:70.5px;width:8px;height:151px;background:#2b2b2b"></div>
  <div id="log">
    <div class="r bd" style="top:0;height:31px">
      <i class="abs" style="left:8.500px;top:10px;border:2.600px solid transparent;border-top:4px solid #9a9a9a"></i>
      <span class="x" style="left:19.500px;top:7px;font-weight:700;color:#e8e8e8">Thu Sep 10 2020 11:59:00 GMT+0800 (<span class="cj">中国标准时间</span>) <span class="cj">配置中关闭合法</span></span>
      <span class="x" style="left:19.500px;top:18.500px;font-weight:700;color:#e8e8e8"><span class="cj">域名、</span>web-view<span class="cj">（业务域名）、</span>TLS <span class="cj">版本以及</span> HTTPS <span class="cj">证书检查</span></span>
      <span class="lk" style="top:7px">VM103 asdebug.js:1</span>
    </div>
    <div class="r" style="top:31px;height:16.300px;background:#332b00;border-bottom-color:#4d4000">
      <div class="abs" style="left:21.500px;top:0;width:1px;height:15px;background:#5c5536"></div>
      <svg class="abs" style="left:14.500px;top:3.500px" width="9" height="9" viewBox="0 0 9 9"><path d="M4.500 0.300L8.800 8.300H0.200z" fill="#f5c518"/><path d="M4.500 3v2.800M4.500 6.600v.9" stroke="#332b00" stroke-width="1"/></svg>
      <i class="abs" style="left:33px;top:5px;border:2.600px solid transparent;border-left:4px solid #a39a6a"></i>
      <span class="x" style="left:38px;top:3px;color:#f2e5b0"><span class="cj">工具未校验合法域名、</span>web-view<span class="cj">（业务域名）、</span>TLS <span class="cj">版本以及</span> HTTPS <span class="cj">证书。</span></span>
      <span class="lk" style="top:3px;color:#a39a6a">VM99:1</span>
    </div>
    <div class="r" style="top:47.300px;height:16.200px"><span class="x" style="left:19.500px;top:3px"><span class="cj">当前位置的经度</span>: 114.30525</span><span class="lk" style="top:3px">index.vue:590</span></div>
    <div class="r" style="top:63.500px;height:16.400px"><span class="x" style="left:19.500px;top:3px"><span class="cj">当前位置的纬度</span>: 30.59276</span><span class="lk" style="top:3px">index.vue:591</span></div>
    <div class="r" style="top:79.900px;height:38.100px">
      <span class="lk" style="top:2.400px">index.vue:441</span>
      <i class="abs" style="left:21px;top:20.500px;border:2.600px solid transparent;border-left:4px solid #9a9a9a"></i>
      <span class="x" style="left:28px;top:14.300px;font-style:italic;color:#a0a0a0">{data<span>:</span> <span style="color:#d6d6d6">{…}</span>, header: <span style="color:#d6d6d6">{…}</span>, statusCode: <span style="color:#9980ff">200</span>, cookies: <span style="color:#d6d6d6">Array(0)</span>, errMsg: <span style="color:#e8544f">"request:o</span></span>
      <span class="x" style="left:28px;top:24.700px;font-style:italic;color:#d6d6d6"><span style="color:#e8544f">k"</span>}</span>
    </div>
    <div class="r" style="top:118px;height:17.300px"><i class="abs" style="left:21px;top:5.500px;border:2.600px solid transparent;border-left:4px solid #9a9a9a"></i><span class="x" style="left:28px;top:3.400px;font-style:italic">{…}</span><span class="lk" style="top:3.400px">index.vue:451</span></div>
    <div class="r" style="top:135.300px;height:17.300px"><i class="abs" style="left:21px;top:5.500px;border:2.600px solid transparent;border-left:4px solid #9a9a9a"></i><span class="x" style="left:28px;top:3.400px;font-style:italic">{…}</span><span class="lk" style="top:3.400px">index.vue:451</span></div>
  </div>
</div>
</body>
</html>
